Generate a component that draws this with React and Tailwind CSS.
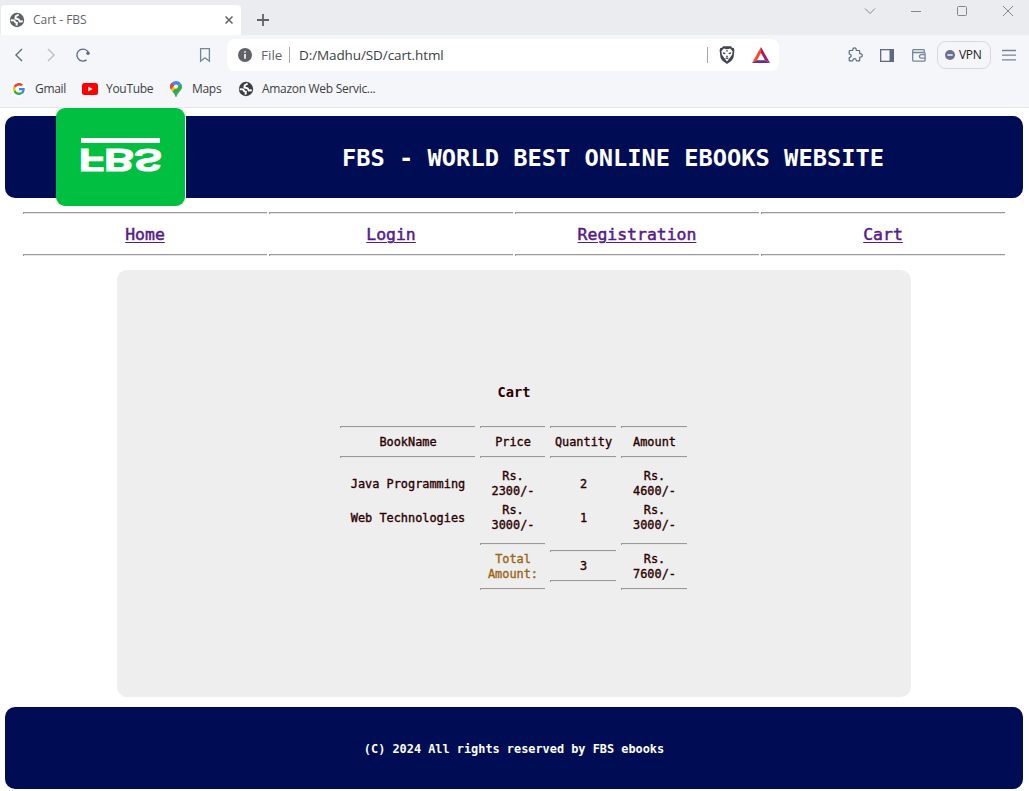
import React from 'react';

const ui = "font-['Open_Sans','Noto_Sans',sans-serif]";

function Rule() {
  return (
    <div className="w-full shrink-0 pr-px">
      <div className="h-[2px] w-full border-l border-t border-l-[#9a9a9a] border-t-[#9a9a9a] bg-[#e6e6e6]" />
    </div>
  );
}

function Globe({ color, className }) {
  return (
    <svg viewBox="0 0 16 16" className={className}>
      <circle cx="8" cy="8" r="7.2" fill={color} />
      <g fill="none" stroke="#fff" strokeWidth="1.9" strokeLinejoin="round">
        <path d="M9.600 2.600L6.700 4.300l-.3 2.200 3.300.9 1.100 2.100 3-.3" />
        <path d="M1.700 8.300l3.500.1 1 1.900 1.700.4-.4 3" />
      </g>
    </svg>
  );
}

function Tabs() {
  return (
    <div className="flex h-[35px] items-end bg-[#ebecf0]">
      <div className="ml-[1px] flex h-[30px] w-[240px] items-center rounded-t-[4px] bg-white pl-[8px] pr-[7px]">
        <Globe color="#5f6368" className="h-4 w-4" />
        <span className="ml-2 flex-1 text-[12px] tracking-[-0.05px] text-[#5f6368]">Cart - FBS</span>
        <svg viewBox="0 0 10 10" className="h-[10px] w-[10px]" fill="none" stroke="#5f6368" strokeWidth="1.5"><path d="M1.500 1.500l7 7M8.500 1.500l-7 7" /></svg>
      </div>
      <svg viewBox="0 0 12 12" className="mb-[9px] ml-4 h-3 w-3" stroke="#5f6368" strokeWidth="1.8"><path d="M6 0v12M0 6h12" /></svg>
      <div className="ml-auto flex h-[35px] items-start gap-[34px] pr-[15px] pt-[5px]">
        <svg viewBox="0 0 12 12" className="h-3 w-3" fill="none" stroke="#868686"><path d="M1 3.500l5 5 5-5" /></svg>
        <svg viewBox="0 0 12 12" className="h-3 w-3" fill="none" stroke="#868686"><path d="M1 6.500h10" /></svg>
        <svg viewBox="0 0 12 12" className="h-3 w-3" fill="none" stroke="#868686"><rect x="1.500" y="1.500" width="9" height="9" rx="1" /></svg>
        <svg viewBox="0 0 12 12" className="h-3 w-3" fill="none" stroke="#868686"><path d="M1 1l10 10M11 1L1 11" /></svg>
      </div>
    </div>
  );
}

function Toolbar() {
  return (
    <div className="flex h-[40px] items-center">
      <svg viewBox="0 0 16 16" className="ml-[11px] h-4 w-4" fill="none" stroke="#5c6b82" strokeWidth="1.4"><path d="M11 2L5 8l6 6" /></svg>
      <svg viewBox="0 0 16 16" className="ml-4 h-4 w-4" fill="none" stroke="#b9bec8" strokeWidth="1.4"><path d="M5 2l6 6-6 6" /></svg>
      <svg viewBox="0 0 16 16" className="ml-4 h-4 w-4" fill="none" stroke="#5c6b82" strokeWidth="1.3">
        <path d="M11.500 12.900A6 6 0 1 1 13.600 6" /><circle cx="13" cy="6.300" r="1.700" fill="#5c6b82" stroke="none" />
      </svg>
      <svg viewBox="0 0 12 16" className="ml-[108px] h-4 w-3" fill="none" stroke="#76849a" strokeWidth="1.3"><path d="M1.600 1.600h8.800v12.600L6 10.800l-4.400 3.400z" /></svg>
      <div className="ml-[16px] flex h-8 w-[552px] items-center rounded-[8px] bg-white pl-[11px] pr-[9px]">
        <svg viewBox="0 0 14 14" className="h-[14px] w-[14px]"><circle cx="7" cy="7" r="7" fill="#5f6368" /><path d="M6.200 6h1.600v4.700H6.200zM6.200 3.300h1.600v1.500H6.200z" fill="#fff" /></svg>
        <span className="ml-[9px] w-[28px] whitespace-nowrap text-[13.500px] text-[#5f6368]">File</span>
        <span className="h-4 w-px bg-[#a4a6a9]" />
        <span className="ml-[9px] flex-1 text-[13.5px] tracking-[-0.1px] text-[#3c4043]">D:/Madhu/SD/cart.html</span>
        <span className="h-4 w-px bg-[#a4a6a9]" />
        <svg viewBox="0 0 16 18" className="ml-[11px] h-[18px] w-4">
          <path d="M4 .3h8l1 1.400 1.800.3.6 2.300-1 7.700-1.900 2.700L8 17.900l-4.500-3.200-1.900-2.700-1-7.700.6-2.300L3 1.700z" fill="#424354" />
          <path d="M4.800 2.600l3.200.7 3.200-.7 2.400 2.600-.5 3.200-2 3L8 15.400l-3.100-4-2-3-.5-3.200z" fill="#fff" />
          <path d="M3.800 6.300l2.900.8-.8 1.200-1.800-.5zM12.200 6.300l-2.900.8.8 1.200 1.800-.5zM8 9.300l1 1.200-1 .9-1-.9zM6 12l2-.5 2 .5-2 1.300zM7 4.300L8 6.300l1-2z" fill="#424354" />
        </svg>
        <svg viewBox="0 0 18 16" className="ml-[17px] h-4 w-[18px]">
          <path d="M9 0L0 16l5-2.800L9 6z" fill="#ff4724" />
          <path d="M9 0l9 16-5-2.800L9 6z" fill="#9e1f63" />
          <path d="M0 16h18l-5-2.800H5z" fill="#662d91" />
        </svg>
      </div>
      <svg viewBox="0 0 16 16" className="ml-[68px] h-4 w-4" fill="none" stroke="#5c6b82" strokeWidth="1.200" strokeLinejoin="round">
        <path d="M3 3.500h2.300c.6 0 .5-.5.500-1a1.700 1.700 0 0 1 3.400 0c0 .5-.1 1 .5 1H12c.5 0 .7.300.7.700v2.100c0 .6.500.5 1 .5a1.600 1.600 0 0 1 0 3.200c-.5 0-1-.1-1 .5v2.700c0 .4-.2.700-.7.700H9.800c-.6 0-.4-.5-.6-1a1.700 1.700 0 0 0-3.300 0c-.2.500 0 1-.6 1H3c-.5 0-.8-.3-.8-.7v-2.100c0-.6.500-.6.900-.8a1.500 1.500 0 0 0 0-2.900c-.4-.2-.9-.2-.9-.8V4.200c0-.4.300-.7.800-.7z" />
      </svg>
      <svg viewBox="0 0 14 13" className="ml-[17px] h-[13px] w-[14px]"><rect x=".65" y=".65" width="12.700" height="11.700" fill="none" stroke="#5c6b82" strokeWidth="1.300" /><path d="M9.500 1h4v11h-4z" fill="#5c6b82" /></svg>
      <svg viewBox="0 0 14 13" className="ml-[18px] h-[13px] w-[14px]" fill="none" stroke="#76849a" strokeWidth="1.300"><path d="M12.300 3.500V1.600c0-.6-.4-1-1-1H1.700c-.6 0-1 .5-1 1v9.400c0 .7.500 1.200 1.200 1.200h10c.7 0 1.200-.5 1.200-1.200V4.700c0-.7-.5-1.200-1.200-1.200H.8M13.300 5.700H9.200a1.500 1.500 0 0 0 0 3.500h4.100" /></svg>
      <div className="ml-[11px] flex h-7 w-[54px] items-center rounded-[9px] border border-[#d5d8e2] pl-[7px]">
        <svg viewBox="0 0 10 10" className="h-[10px] w-[10px]"><circle cx="5" cy="5" r="5" fill="#6b6f91" /><path d="M2.300 4.300h5.400v1.400H2.300z" fill="#fff" /></svg>
        <span className="ml-[4px] text-[12px] tracking-[-0.3px] text-[#202124]">VPN</span>
      </div>
      <svg viewBox="0 0 14 12" className="ml-[11px] h-3 w-[14px]" stroke="#76849a" strokeWidth="1.300"><path d="M0 1.500h14M0 6.200h14M0 10.900h14" /></svg>
    </div>
  );
}

function Bookmarks() {
  const label = 'whitespace-nowrap text-[12px] tracking-[-0.3px] text-[#3c4043]';
  return (
    <div className="flex h-[33px] items-start pt-[5px]">
      <div className="flex h-[18px] w-full items-center">
        <span className="ml-[11px] flex h-4 w-4 items-center justify-center rounded-full bg-white">
          <svg viewBox="0 0 48 48" className="h-3 w-3">
            <path fill="#EA4335" d="M24 9.500c3.540 0 6.710 1.220 9.210 3.600l6.850-6.850C35.900 2.380 30.470 0 24 0 14.620 0 6.510 5.380 2.560 13.220l7.980 6.190C12.430 13.720 17.740 9.500 24 9.500z" />
            <path fill="#4285F4" d="M46.980 24.550c0-1.570-.15-3.090-.38-4.550H24v9.020h12.940c-.58 2.960-2.260 5.480-4.780 7.180l7.730 6c4.510-4.180 7.090-10.360 7.090-17.650z" />
            <path fill="#FBBC05" d="M10.530 28.590c-.48-1.450-.76-2.990-.76-4.590s.27-3.140.76-4.590l-7.980-6.190C.92 16.460 0 20.120 0 24c0 3.880.92 7.540 2.560 10.780l7.970-6.190z" />
            <path fill="#34A853" d="M24 48c6.480 0 11.930-2.130 15.890-5.810l-7.730-6c-2.150 1.450-4.920 2.300-8.160 2.300-6.260 0-11.570-4.220-13.470-9.910l-7.980 6.190C6.510 42.620 14.620 48 24 48z" />
          </svg>
        </span>
        <span className={`${label} ml-2 w-[47px]`}>Gmail</span>
        <svg viewBox="0 0 16 12" className="h-3 w-4"><rect width="16" height="12" rx="2.500" fill="#f00" /><path d="M6.300 3.500v5L10.600 6z" fill="#fff" /></svg>
        <span className={`${label} ml-2 w-[64px]`}>YouTube</span>
        <svg viewBox="0 0 12 16" className="h-4 w-3">
          <path d="M6 0c1.900 0 3.600.9 4.700 2.300L4.200 9.200.9 8.400C.3 7.500 0 6.700 0 5.800A6 6 0 0 1 6 0z" fill="#4285f4" />
          <path d="M1.400 2l3.200 2.600L1.300 9C.4 7.900 0 6.900 0 5.800 0 4.300.5 3 1.400 2z" fill="#ea4335" />
          <path d="M8.200 6.800L2.500 10.600C1.900 9.900 1.300 9.200.9 8.400l3-3.600z" fill="#fbbc04" />
          <path d="M10.700 2.300C11.600 3.300 12 4.600 12 5.900c0 3.900-4.500 5.200-5.400 9.500-.2.800-1 .8-1.200 0-.5-2.200-1.800-3.500-3-5z" fill="#34a853" />
          <circle cx="6" cy="5.600" r="2.100" fill="#fff" />
        </svg>
        <span className={`${label} ml-[10px] w-[46px]`}>Maps</span>
        <Globe color="#3c4043" className="h-4 w-4" />
        <span className={`${label} ml-2`}>Amazon Web Servic...</span>
      </div>
    </div>
  );
}

function Logo() {
  return (
    <svg viewBox="0 0 130 98" className="ml-[51px] h-[98px] w-[130px] shrink-0">
      <rect x="1" width="129" height="98" rx="9" fill="#e8fff0" />
      <rect width="129" height="98" rx="9" fill="#00bf41" />
      <rect x="25" y="30" width="79" height="5" fill="#fff" />
      <g transform="translate(0 41) scale(1 -1)">
        <text x="23" y="0" textLength="83" lengthAdjust="spacingAndGlyphs" fill="#fff" stroke="#fff" strokeWidth="1.2" className="font-['Liberation_Sans',sans-serif] text-[32px] font-bold">FBS</text>
      </g>
    </svg>
  );
}

function Box({ className = '', children }) {
  return (
    <div className={`flex flex-col text-center ${className}`}>
      <Rule />
      <div className="py-[6.500px]">{children}</div>
      <Rule />
    </div>
  );
}

const headings = ['BookName', 'Price', 'Quantity', 'Amount'];
const books = [
  ['Java Programming', '2300/-', '2', '4600/-'],
  ['Web Technologies', '3000/-', '1', '3000/-'],
];

export default function App() {
  const cols = 'grid grid-cols-[136px_66px_67px_67px] gap-x-1 items-center text-center';
  return (
    <div className="h-[791px] w-[1029px] overflow-hidden bg-white">
      <div className={`${ui} h-[108px] border-b border-[#e6e7ea] bg-[#f5f6f9]`}>
        <Tabs />
        <Toolbar />
        <Bookmarks />
      </div>
      <div className="flex flex-col pl-[5px] pr-[6px] pt-2 font-['DejaVu_Sans_Mono',monospace]">
        <header className="flex h-[82px] items-center rounded-[10px] bg-[#000d54]">
          <Logo />
          <h1 className="ml-[17px] flex-1 whitespace-nowrap pt-[2px] text-center text-[23.700px] font-bold leading-8 text-white">FBS - WORLD BEST ONLINE EBOOKS WEBSITE</h1>
        </header>
        <nav className="ml-[18px] mt-[14px] grid w-[983px] grid-cols-[245px_245px_245px_245px] gap-x-px">
          {['Home', 'Login', 'Registration', 'Cart'].map((item) => (
            <div key={item} className="flex flex-col">
              <Rule />
              <a href="#" className="block h-10 pr-px pt-px text-center text-[16.450px] leading-[40px] text-[#551a8b] underline decoration-1 underline-offset-2 [-webkit-text-stroke:0.5px_#551a8b]">{item}</a>
              <Rule />
            </div>
          ))}
        </nav>
        <main className="ml-[112px] mt-[14px] flex h-[427px] w-[794px] flex-col items-center rounded-[10px] bg-[#eee] pt-[112px] text-[11.880px] leading-[15px] text-[#2a0000] [-webkit-text-stroke:0.35px_#2a0000]">
          <h2 className="h-5 text-[13.700px] font-bold leading-5 [-webkit-text-stroke:0]">Cart</h2>
          <div className={`${cols} mt-6`}>
            {headings.map((h) => <Box key={h}>{h}</Box>)}
          </div>
          <div className="mt-[11px] flex flex-col gap-1">
            {books.map(([name, price, qty, amount]) => (
              <div key={name} className={cols}>
                <span className="whitespace-nowrap">{name}</span>
                <span>Rs.<br />{price}</span>
                <span>{qty}</span>
                <span>Rs.<br />{amount}</span>
              </div>
            ))}
          </div>
          <div className={`${cols} mt-[10px]`}>
            <span />
            <Box className="text-[#996515] [-webkit-text-stroke:0.35px_#996515]">Total<br />Amount:</Box>
            <Box className="mb-px">3</Box>
            <Box>Rs.<br />7600/-</Box>
          </div>
        </main>
        <footer className="mt-[10px] flex h-[82px] items-center justify-center rounded-[10px] bg-[#000d54] pt-[3px] text-[11.880px] font-bold text-white">
          (C) 2024 All rights reserved by FBS ebooks
        </footer>
      </div>
    </div>
  );
}
